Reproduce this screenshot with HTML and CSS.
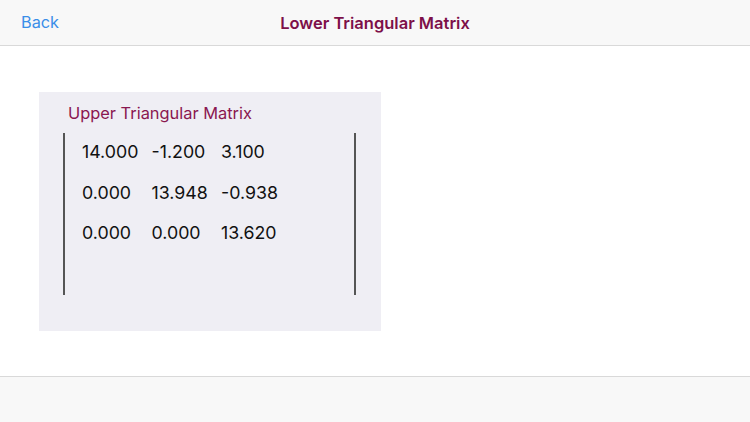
FILE: index.html
```html
<!DOCTYPE html>
<html>
<head>
<meta charset="utf-8">
<link rel="stylesheet" href="styles.css">
</head>
<body>
<div class="app">
  <header class="navbar">
    <span class="back">Back</span>
    <span class="nav-title">Lower Triangular Matrix</span>
  </header>
  <main class="content">
    <section class="panel">
      <div class="panel-title">Upper Triangular Matrix</div>
      <div class="matrix">
        <div class="row"><span class="cell">14.000</span><span class="cell">-1.200</span><span class="cell">3.100</span></div>
        <div class="row"><span class="cell">0.000</span><span class="cell">13.948</span><span class="cell">-0.938</span></div>
        <div class="row"><span class="cell">0.000</span><span class="cell">0.000</span><span class="cell">13.620</span></div>
      </div>
    </section>
  </main>
  <footer class="toolbar"></footer>
</div>
</body>
</html>
```
FILE: styles.css
```css
html, body {
  margin: 0;
  padding: 0;
  width: 750px;
  height: 422px;
  overflow: hidden;
  font-family: "Inter", "Roboto", sans-serif;
}
.app {
  display: flex;
  flex-direction: column;
  height: 422px;
}
.navbar {
  height: 45px;
  background: #f8f8f8;
  border-bottom: 1px solid #d9d9d9;
  display: flex;
  align-items: center;
  justify-content: center;
  position: relative;
}
.back {
  position: absolute;
  left: 21px;
  top: 12px;
  font-size: 16.3px;
  color: #3a8ee8;
}
.nav-title {
  font-size: 16.5px;
  font-weight: 600;
  color: #7d1049;
}
.content {
  flex: 1;
  background: #ffffff;
  padding: 46px 0 0 39px;
}
.panel {
  width: 342px;
  height: 239px;
  box-sizing: border-box;
  background: #efeef4;
  padding: 10px 0 0 24px;
}
.panel-title {
  font-size: 16.4px;
  color: #8a1750;
  padding-left: 5px;
  height: 31px;
  line-height: 22px;
}
.matrix {
  width: 293px;
  height: 162px;
  box-sizing: border-box;
  border-left: 2px solid #555;
  border-right: 2px solid #555;
  padding-left: 17px;
}
.row {
  display: flex;
  height: 40.5px;
  line-height: 38px;
}
.cell {
  width: 69.5px;
  font-size: 17.8px;
  color: #111;
}
.toolbar {
  height: 45px;
  background: #f8f8f8;
  border-top: 1px solid #d9d9d9;
}
```
